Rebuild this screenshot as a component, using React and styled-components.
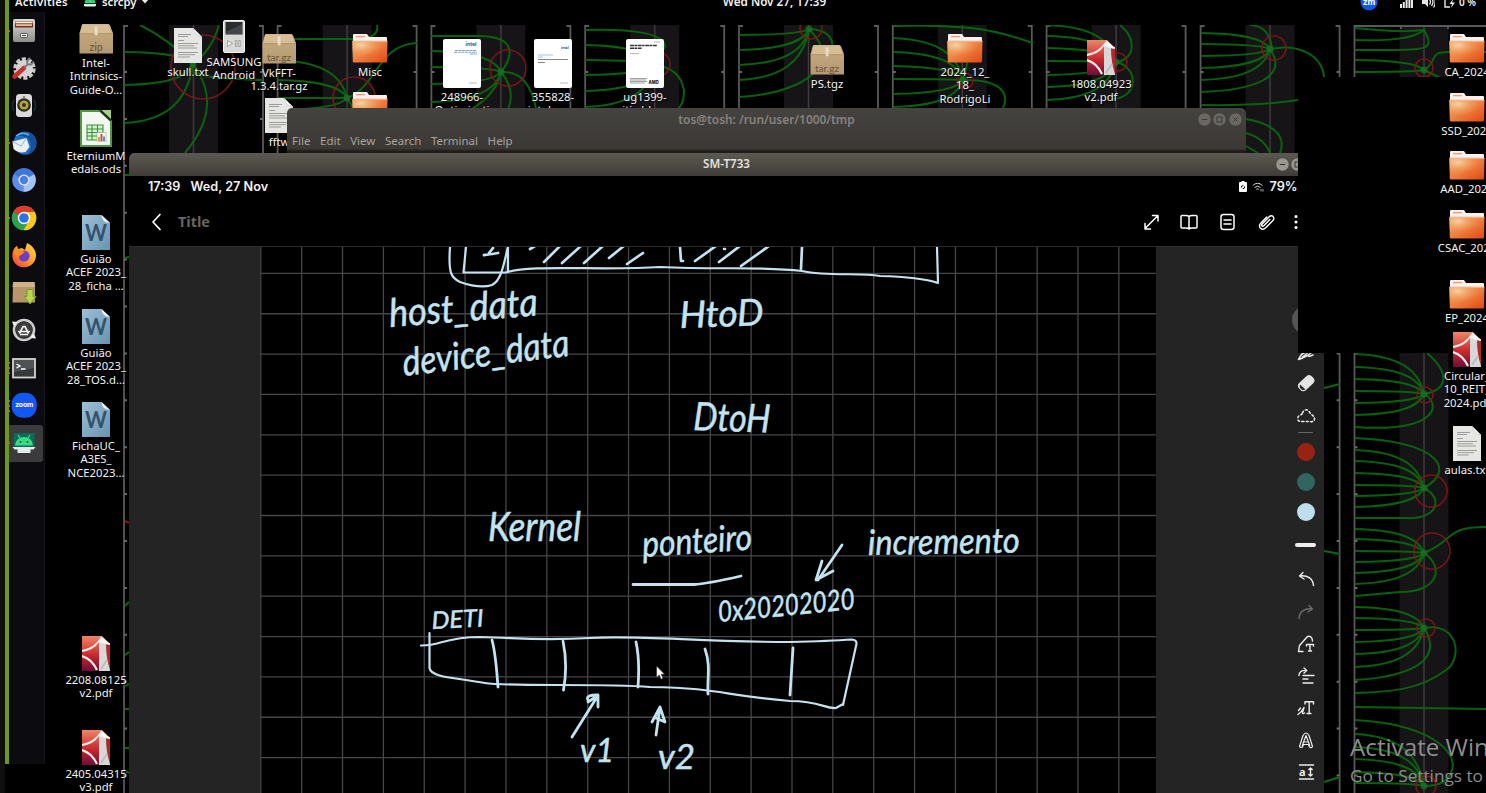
import React from "react";
import styled, { createGlobalStyle } from "styled-components";

const Global = createGlobalStyle`
  * { box-sizing: border-box; }
  html, body { margin: 0; padding: 0; background: #000; overflow: hidden; }
`;

const Desktop = styled.div`
  position: relative;
  width: 1486px;
  height: 793px;
  overflow: hidden;
  background: #000;
  font-family: "Noto Sans", "Open Sans", sans-serif;
  color: #f2f2f2;
`;

const Wallpaper = styled.svg`
  position: absolute;
  left: 0;
  top: 25px;
`;

/* ---------- shell ---------- */

const TopBar = styled.header`
  position: absolute;
  left: 5px;
  right: 0;
  top: -12px;
  height: 27px;
  display: grid;
  grid-template-columns: 1fr auto 1fr;
  align-items: center;
  padding: 0 0 0 10px;
  font: 600 11.3px "Noto Sans", sans-serif;
`;

const BarLeft = styled.div`
  display: flex;
  align-items: center;
  gap: 6px;
  & > span:first-child { margin-right: 10px; letter-spacing: 0.25px; }
`;

const Clock = styled.div`
  padding-left: 48px;
  font-size: 11.7px;
  margin-top: -2px;
`;

const BarRight = styled.div`
  display: flex;
  align-items: center;
  justify-content: flex-end;
  gap: 9px;
  margin-right: -7px;
  font-size: 10px;
  & > svg:first-child { margin-right: 13px; }
`;

const ScreenEdge = styled.div`
  position: absolute;
  left: 0;
  top: 0;
  width: 5px;
  height: 793px;
  background: #0f0f0f;
`;

const Dock = styled.nav`
  position: absolute;
  left: 5px;
  top: 0;
  width: 40px;
  height: 764px;
  padding-top: 12px;
  border-left: 4px solid #6b981d;
`;

const DockList = styled.div`
  height: 752px;
  background: #0c0b0f;
  border-right: 1px solid #17161a;
  display: flex;
  flex-direction: column;
`;

const DockItem = styled.div`
  position: relative;
  height: 37.5px;
  width: 33.5px;
  display: flex;
  align-items: center;
  justify-content: center;
  padding: 0 3px 1px 0;
  border-radius: 0 3px 3px 0;
  background: ${(p) => (p.$active ? "#3b3a3d" : "transparent")};
`;

const RunningDots = styled.i`
  position: absolute;
  left: -1px;
  top: 50%;
  width: 2px;
  height: ${(p) => p.$count * 5 - 3}px;
  transform: translateY(-50%);
  background: repeating-linear-gradient(#a3741a 0 2px, transparent 2px 5px);
`;

const Privacy = styled.div`
  position: absolute;
  left: 1298px;
  top: 77px;
  width: 188px;
  height: 276px;
  background: #000;
`;

const Item = styled.figure`
  position: absolute;
  margin: 0;
  left: ${(p) => p.$x - 50}px;
  top: ${(p) => p.$y}px;
  width: 100px;
  display: flex;
  flex-direction: column;
  align-items: center;
  gap: 2px;
`;

const Caption = styled.figcaption`
  font-size: 11.3px;
  line-height: 13.3px;
  text-align: center;
  white-space: nowrap;
  text-shadow: 1px 1px 1px #000;
  span { display: block; }
`;

const Watermark = styled.div`
  position: absolute;
  left: 1350px;
  top: 731px;
  width: 200px;
  white-space: nowrap;
  font-family: "Open Sans", "Noto Sans", sans-serif;
  color: #8d8d8d;
  font-size: 24.2px;
  line-height: 31px;
`;

const WatermarkNote = styled.div`
  font-size: 17.2px;
  line-height: 27px;
`;

/* ---------- windows ---------- */

const TerminalWindow = styled.section`
  position: absolute;
  left: 287px;
  top: 108px;
  width: 959px;
  height: 45px;
  border-radius: 5px 5px 0 0;
  background: linear-gradient(#454340, #3b3835 90%, #201e1d 96%);
  color: #8a8782;
`;

const TitleBar = styled.div`
  height: ${(p) => p.$h}px;
  display: grid;
  grid-template-columns: 1fr auto 1fr;
  align-items: center;
  font-weight: 600;
  font-size: ${(p) => (p.$focused ? 11.6 : 11.9)}px;
  color: ${(p) => (p.$focused ? "#e3e1dc" : "#86837e")};
  background: ${(p) => (p.$focused ? "linear-gradient(#5c5952, #403d39)" : "transparent")};
  border-radius: 5px 5px 0 0;
  padding-right: ${(p) => p.$pad}px;
  & > span { grid-column: 2; padding-left: ${(p) => p.$pad}px; margin-top: -2px; }
`;

const Buttons = styled.div`
  display: flex;
  justify-content: flex-end;
  gap: 2.7px;
  margin-top: -1px;
`;

const MenuBar = styled.div`
  display: flex;
  align-items: center;
  height: 17px;
  padding-left: 5px;
  gap: 9.6px;
  font-size: 11.5px;
  color: #a7a39c;
`;

const TabletWindow = styled.section`
  position: absolute;
  left: 129px;
  top: 153px;
  width: 1195px;
  height: 640px;
  background: #000;
  overflow: hidden;
  border-radius: 5px 5px 0 0;
  display: flex;
  flex-direction: column;
`;

const StatusBar = styled.div`
  height: 21px;
  display: flex;
  justify-content: space-between;
  align-items: center;
  padding: 0 26.5px 0 19px;
  font: 600 12.7px "Inter", sans-serif;
`;

const StatusGroup = styled.div`
  display: flex;
  align-items: center;
  gap: ${(p) => p.$gap}px;
`;

const NoteHeader = styled.div`
  height: 49px;
  display: flex;
  justify-content: space-between;
  align-items: center;
  padding: 0 25px 0 21px;
`;

const NoteTitle = styled.div`
  display: flex;
  align-items: center;
  gap: 16px;
  font: 700 14.4px "Open Sans", sans-serif;
  color: #6a6664;
`;

const NoteActions = styled.div`
  display: flex;
  align-items: center;
  gap: 20px;
`;

const NoteBody = styled.div`
  flex: 1;
  display: flex;
  background: #242424;
  border-top: 1px solid #2c2c2c;
`;

const Paper = styled.svg`
  margin-left: 131px;
  flex: none;
  background: #000;
`;

const Tools = styled.aside`
  flex: 1;
  display: flex;
  flex-direction: column;
  align-items: center;
  padding: 55px 0 0 131px;
`;

const ToolCell = styled.div`
  height: ${(p) => p.$h}px;
  width: 36px;
  flex: none;
  display: flex;
  align-items: center;
  justify-content: center;
`;

const Swatch = styled.div`
  width: ${(p) => p.$size || 18}px;
  height: ${(p) => p.$size || 18}px;
  border-radius: 50%;
  background: ${(p) => p.$color};
`;

const Rule = styled.div`
  width: ${(p) => p.$w}px;
  height: ${(p) => p.$h}px;
  border-radius: 2px;
  background: ${(p) => p.$color};
`;

/* ---------- wallpaper drawing ---------- */

const FIELDS = [
  { x: 124, n: [193, 64], c: [203, 67, 32], ys: [52, 85, 123], extra: ["M140 25Q170 40 193 64", "M219 25Q212 50 193 64T263 80", "M193 64C212 90 214 118 185 153"] },
  { x: 277, n: [347, 98], c: [354, 98, 21], ys: [60, 80, 98, 110], extra: ["M277 39H350Q380 40 377 25", "M347 98C376 88 378 44 417 43", "M347 98Q362 120 360 150"] },
  { x: 431, n: [501, 72], c: [508, 68, 18], ys: [51, 67, 84, 102], extra: ["M431 36H475C520 35 512 58 501 72Q528 70 536 108", "M501 72Q516 90 508 110", "M501 72Q496 95 470 110"] },
  { x: 585, n: [655, 65], c: [658, 64, 12], ys: [45, 60, 75, 91, 107], extra: ["M585 30Q662 28 665 46L655 65Q680 68 684 90Q684 106 676 110"] },
  { x: 739, n: [809, 29], c: [811, 28, 11], ys: [35, 50, 65, 80], extra: ["M739 97C790 95 850 70 809 29Q836 30 832 52"] },
  { x: 893, n: [963, 80], c: [965, 81, 8], ys: [38, 52, 66, 79, 94, 107], extra: ["M893 26C980 24 1000 32 1033 43", "M963 80C1000 79 1010 93 1003 108", "M963 80Q970 60 966 45"] },
  { x: 1047, n: [1116, 62], c: [1118, 62, 9], ys: [25, 36, 48, 61, 75, 87, 100], extra: ["M1120 25C1138 40 1134 60 1116 62C1138 66 1140 98 1112 99"] },
  { x: 1201, n: [1270, 49], c: [1274, 48, 12], ys: [33, 44, 56, 68, 80], extra: ["M1201 92C1260 90 1288 75 1270 49C1300 43 1322 56 1324 77", "M1201 105Q1260 106 1298 100", "M1246 119C1276 124 1286 138 1280 153", "M1246 133Q1264 138 1270 153M1246 146L1258 153", "M1250 25Q1270 26 1272 49"] },
  { x: 1355, n: [1424, 70], c: [1424, 68, 9], ys: [60, 72], extra: ["M1355 28Q1400 33 1424 30C1436 52 1428 50 1355 50", "M1355 40Q1410 42 1424 30", "M1424 70C1440 60 1426 51 1452 52H1486", "M1424 70L1445 80"] },
  { x: 1355, n: [1424, 394], c: [1425, 395, 8], ys: [354, 367, 379, 391, 403, 415], extra: ["M1427 353C1452 375 1446 390 1424 394C1442 404 1438 433 1355 427"] },
  { x: 1355, n: [1424, 488], c: [1431, 491, 16], ys: [450, 461, 473, 485, 496, 507], extra: ["M1355 438C1440 442 1456 470 1424 488C1444 498 1438 520 1405 518H1355"] },
  { x: 1355, n: [1424, 553], c: [1432, 551, 18], ys: [529, 539, 551, 562, 573, 584], extra: ["M1424 553C1456 540 1444 527 1486 527", "M1424 553C1444 566 1440 592 1400 592L1355 596"] },
  { x: 1355, n: [1424, 628], c: [1426, 628, 9], ys: [607, 618, 630, 642, 654, 667], extra: ["M1355 680C1420 676 1442 656 1424 628C1460 622 1462 660 1446 670C1420 690 1390 692 1355 693"] },
  { x: 1355, n: [1424, 786], c: [1426, 786, 10], ys: [734, 747, 759, 772, 783], extra: ["M1355 707L1486 709", "M1355 720C1430 724 1458 752 1452 770Q1448 786 1424 786"] },
];

function FieldLines() {
  const panels = [124, 277.6, 431.4, 585.2, 739, 892.8, 1046.6, 1200.6, 1354.5];
  const ticks = Array.from({ length: 16 }, (_, i) => 72 + i * 46.9);
  return (
    <Wallpaper width="1486" height="768" viewBox="0 25 1486 768" fill="none">
      {panels.map((x) => (
        <g key={x}>
          <rect x={x + 45} y="25" width="49" height="768" fill="#161417" />
          <path d={`M${x + 69.5} 25V793`} stroke="#3d3b3f" strokeWidth="1.5" />
          <path d={`M${x + 4} 26H${x}V793M${x + 135} 26H${x + 139}V793`} stroke="#59595b" strokeWidth="1.8" />
          {ticks.map((y) => (
            <path key={y} d={`M${x} ${y}h3M${x + 139} ${y}h-3`} stroke="#68686a" strokeWidth="2" />
          ))}
        </g>
      ))}
      <path d="M1354 26H1486M1401 26v3M1448 26v3" stroke="#59595b" strokeWidth="1.8" />
      {FIELDS.map((f, i) => (
        <g key={i}>
          <g stroke="#076b0c" strokeWidth="2" opacity=".92">
            {f.ys.map((y) => (
              <path
                key={y}
                d={`M${f.x} ${y}C${f.x + 40} ${y + (f.n[1] - y) * 0.04} ${f.n[0] - 6} ${f.n[1] + (y - f.n[1]) * 0.68} ${f.n[0]} ${f.n[1]}`}
              />
            ))}
            {f.extra.map((d) => (
              <path key={d} d={d} />
            ))}
          </g>
          <circle cx={f.c[0]} cy={f.c[1]} r={f.c[2]} stroke="#861518" strokeWidth="1.6" opacity=".88" />
          <circle cx={f.n[0]} cy={f.n[1]} r="3.500" fill="#20702a" opacity=".7" />
        </g>
      ))}
      <path
        d="M1324 388l16-4M1324 551l16 3M1324 782l16-5M125 175h4M125 258l4-1M125 606l4-4M125 655l4-3M125 686l4-2M125 709h4M125 748h4M125 771l4 2"
        stroke="#076b0c"
        strokeWidth="2"
      />
      <path d="M125 521l4 2" stroke="#861518" strokeWidth="2" />
    </Wallpaper>
  );
}

/* ---------- file icons ---------- */

const Gradients = () => (
  <svg width="0" height="0" style={{ display: "block" }}>
    <defs>
      <linearGradient id="folder" x1="0" y1="0" x2="1" y2="1">
        <stop offset="0" stopColor="#f3a765" />
        <stop offset=".45" stopColor="#ee8444" />
        <stop offset="1" stopColor="#e4460f" />
      </linearGradient>
      <radialGradient id="glow" cx=".25" cy=".2" r=".6">
        <stop offset="0" stopColor="#f9dcae" stopOpacity=".85" />
        <stop offset="1" stopColor="#f0a060" stopOpacity="0" />
      </radialGradient>
      <linearGradient id="box" x1="0" y1="0" x2="0" y2="1">
        <stop offset="0" stopColor="#c9ac82" />
        <stop offset="1" stopColor="#b39a71" />
      </linearGradient>
      <linearGradient id="word" x1="0" y1="0" x2="1" y2="1">
        <stop offset="0" stopColor="#9cc0d6" />
        <stop offset="1" stopColor="#6894b0" />
      </linearGradient>
      <linearGradient id="pdf" x1="0" y1="0" x2="0" y2="1">
        <stop offset="0" stopColor="#f08468" />
        <stop offset=".55" stopColor="#c8282c" />
        <stop offset="1" stopColor="#6d0d3a" />
      </linearGradient>
      <linearGradient id="metal" x1="0" y1="0" x2="0" y2="1">
        <stop offset="0" stopColor="#dcdcda" />
        <stop offset="1" stopColor="#8d8d8b" />
      </linearGradient>
      <linearGradient id="fire" x1="1" y1="0" x2="0" y2="1">
        <stop offset="0" stopColor="#ffe04a" />
        <stop offset=".5" stopColor="#ff9a26" />
        <stop offset="1" stopColor="#f0314e" />
      </linearGradient>
    </defs>
  </svg>
);

const FolderArt = () => (
  <svg width="36" height="29" viewBox="0 0 36 29">
    <path d="M1 1q0-1 1-1h13l2 3h17q1 0 1 1v6H1z" fill="#f6f0ee" />
    <path d="M4 2.6h9" stroke="#ee9c77" strokeWidth="1.4" />
    <path d="M0.3 7.2h35.2L35 27.5q0 1-1 1H1.8q-1 0-1-1z" fill="url(#folder)" />
    <path d="M0.3 7.2h35.2L35 18Q14 18 .8 27z" fill="url(#glow)" />
    <path d="M.3 7.2h35.2" stroke="#f6b08b" />
  </svg>
);

const BoxArt = ({ label }) => (
  <svg width="34" height="30" viewBox="0 0 34 30">
    <path d="M4 0h25q2 0 3 4l2 5v20.5H.5V9L2 4q.6-4 2-4z" fill="url(#box)" />
    <path d="M3.6.6h26l3.2 9H1.2z" fill="#d6bd96" />
    <path d="M.5 9.7h33" stroke="#a88d62" strokeWidth=".8" />
    <path d="M15.6 2.5h3v8l-1.5 1.3-1.5-1.3z" fill="#eadcc3" />
    <text x="17" y="26.500" textAnchor="middle" fontFamily="Lato, sans-serif" fontWeight="500" fontSize={label === "zip" ? 10.5 : 10} fill="#6d583a">
      {label}
    </text>
  </svg>
);

const TextArt = () => (
  <svg width="28" height="35" viewBox="0 0 28 35">
    <path d="M0 0h19l9 9v26H0z" fill="#e6e6e4" />
    <path d="M19 0q1 7 9 9z" fill="#fff" stroke="#b5b5b3" strokeWidth=".6" />
    <path d="M4 6.500h13M4 8.500h10M4 12.500h6M4 15.500h20M4 17.800h16M4 20h19M4 24.500h20M4 26.700h17M4 29h12" stroke="#94948f" strokeWidth=".9" />
  </svg>
);

const WordArt = () => (
  <svg width="28" height="35" viewBox="0 0 28 35">
    <path d="M0 0h19.500L28 8v27H0z" fill="url(#word)" />
    <path d="M19.500 0q0 7 8.500 8z" fill="#f0f4f7" />
    <text x="14" y="26" textAnchor="middle" fontFamily="Lato, sans-serif" fontWeight="700" fontSize="22" fill="#36516b" textLength="22" lengthAdjust="spacingAndGlyphs">
      W
    </text>
  </svg>
);

const PdfArt = () => (
  <svg width="28" height="35" viewBox="0 0 28 35">
    <path d="M0 0h20l8 8v27H0z" fill="url(#pdf)" />
    <path d="M17 5l11 2v28H17z" fill="#d9d8d8" />
    <path d="M24 8q0 14 4 26V9z" fill="#b8262b" />
    <path d="M0 14Q12 12 19 1l9 8Q22 8 17 6 12 14 0 16z" fill="#f3efee" />
    <path d="M0 20Q10 23 15 34" stroke="#f3efee" strokeWidth="2.2" fill="none" />
    <path d="M19 33q4-6 6-9" stroke="#bdbdbd" strokeWidth="2" fill="none" />
    <path d="M19 0l9 8-6-1z" fill="#fff" />
  </svg>
);

const SheetArt = () => (
  <svg width="32" height="37" viewBox="0 0 32 37">
    <path d="M1 1h19l11 10v25H1z" fill="#f4f6f1" stroke="#4c9a3c" strokeWidth="2" />
    <path d="M20 0h11v10z" fill="#a7cd86" />
    <path d="M20 0l11 10.500" stroke="#152a10" strokeWidth="2" />
    <path d="M7 15h16v15H7z" fill="#d9efcf" />
    <path d="M7 15h16v15H7zM7 19h16M7 22.500h16M7 26h16M12 15v15M17.500 15v15" stroke="#2f9a33" strokeWidth="1.1" fill="none" />
    <rect x="17" y="22.500" width="9" height="9" fill="#fbfbfb" stroke="#999" strokeWidth=".5" />
    <path d="M18 27h2v4h-2z" fill="#d9a030" />
    <path d="M20.500 24h2v7h-2z" fill="#c9522c" />
    <path d="M23 26.500h2V31h-2z" fill="#5b8ecb" />
  </svg>
);

const PlayerArt = () => (
  <svg width="22" height="33" viewBox="0 0 22 33">
    <rect x=".5" y=".5" width="21" height="32" rx="1.500" fill="#d9d9d7" stroke="#f4f4f4" />
    <rect x="2.500" y="2" width="17" height="12.500" fill="#2b2c2e" />
    <path d="M3 12L19 4v10H3z" fill="#444649" />
    <path d="M4.500 20.500l5 3-5 3zM12.500 20.500h1.500v6h-1.500zM15.800 20.500h1.500v6h-1.500z" fill="#f4f4f4" stroke="#888" strokeWidth=".7" />
  </svg>
);

const PageArt = ({ variant }) => (
  <svg width="38" height="49" viewBox="0 0 38 49">
    <rect width="38" height="49" rx="2" fill="#fff" />
    {variant === "amd" ? (
      <g>
        <path d="M4 6.500h27M4 9.300h12" stroke="#333" strokeWidth="1.500" strokeDasharray="4 .5 2.500 .6" />
        <path d="M4 14.500h9M28 3h6" stroke="#999" strokeWidth=".7" />
        <path d="M4 39.500h17M4 41h16M4 42.500h17M4 44h15" stroke="#888" strokeWidth=".8" />
        <text x="22.500" y="44.500" fontSize="4.200" fontWeight="800" fill="#111" fontFamily="Inter">AMD</text>
      </g>
    ) : (
      <g>
        <text x={variant === "big" ? 22.5 : 27} y={variant === "big" ? 6.5 : 9.5} fontSize={variant === "big" ? 5.2 : 3.6} fontWeight="700" fill="#1d63a5" fontFamily="Inter">
          intel
        </text>
        {variant === "big" ? (
          <path d="M12 11.500h22M11 13.300h23M27 15h7" stroke="#7aa4cb" strokeWidth="1.100" strokeDasharray="3 .6" />
        ) : (
          <path d="M4 16h15M4 18h5" stroke="#8ab" strokeWidth=".7" />
        )}
        {variant !== "big" && <path d="M4 20.500h30M4 23.500h7" stroke="#555" strokeWidth=".7" />}
        <path d="M26 44h8" stroke="#aaa" strokeWidth=".8" />
      </g>
    )}
  </svg>
);

const ART = {
  folder: <FolderArt />,
  zip: <BoxArt label="zip" />,
  tar: <BoxArt label="tar.gz" />,
  txt: <TextArt />,
  word: <WordArt />,
  pdf: <PdfArt />,
  ods: <SheetArt />,
  player: <PlayerArt />,
  intel: <PageArt variant="big" />,
  intel2: <PageArt variant="small" />,
  amd: <PageArt variant="amd" />,
};

const FILES = [
  [96, 24, "zip", ["Intel-", "Intrinsics-", "Guide-O…"]],
  [96, 110, "ods", ["EterniumM", "edals.ods"]],
  [96, 215, "word", ["Guião", "ACEF 2023_", "28_ficha …"]],
  [96, 309, "word", ["Guião", "ACEF 2023_", "28_TOS.d…"]],
  [96, 402, "word", ["FichaUC_", "A3ES_", "NCE2023…"]],
  [96, 636, "pdf", ["2208.08125", "v2.pdf"]],
  [96, 730, "pdf", ["2405.04315", "v3.pdf"]],
  [188, 28, "txt", ["skull.txt"]],
  [234, 20, "player", ["SAMSUNG", "Android"]],
  [279, 34, "tar", ["VkFFT-", "1.3.4.tar.gz"]],
  [279, 98, "txt", ["fftw"]],
  [370, 34, "folder", ["Misc"]],
  [370, 92, "folder", []],
  [462, 39, "intel", ["248966-", "Optimizati"]],
  [553, 39, "intel2", ["355828-", "intel-soxy"]],
  [645, 39, "amd", ["ug1399-", "vitis-hls-en"]],
  [827, 45, "tar", ["PS.tgz"]],
  [965, 34, "folder", ["2024_12_", "18_", "RodrigoLi"]],
  [1101, 40, "pdf", ["1808.04923", "v2.pdf"]],
];

const COURSE_FILES = [
  [1467, 34, "folder", ["CA_2024"]],
  [1467, 93, "folder", ["SSD_2024"]],
  [1467, 151, "folder", ["AAD_2024"]],
  [1467, 210, "folder", ["CSAC_2024"]],
  [1467, 280, "folder", ["EP_2024"]],
  [1467, 332, "pdf", ["Circular_", "10_REIT_", "2024.pdf"]],
  [1467, 426, "txt", ["aulas.txt"]],
];

const FileItems = ({ files }) =>
  files.map(([x, y, kind, lines]) => (
    <Item key={`${x}-${y}`} $x={x} $y={y}>
      {ART[kind]}
      <Caption>
        {lines.map((l) => (
          <span key={l}>{l}</span>
        ))}
      </Caption>
    </Item>
  ));

/* ---------- dock icons ---------- */

const DockSvg = ({ children }) => (
  <svg width="26" height="26" viewBox="0 0 26 26" fill="none">
    {children}
  </svg>
);

const Droid = () => (
  <g>
    <path d="M4 14a9 8.500 0 0 1 18 0z" fill="#3ddc84" />
    <path d="M7 3.500l2.500 4M19 3.500l-2.500 4" stroke="#3ddc84" strokeWidth="1.300" />
    <circle cx="9.500" cy="10.500" r="1" fill="#0b5b45" />
    <circle cx="16.500" cy="10.500" r="1" fill="#0b5b45" />
  </g>
);

const DOCK = [
  {
    id: "files", running: 1, art: (
      <>
        <rect x="2" y="2" width="22" height="23" rx="2" fill="url(#metal)" />
        <path d="M4 4.500h18v6H4z" fill="#6b3020" />
        <path d="M4.500 5.500h17M5 8h16" stroke="#fff1df" strokeWidth="1.400" />
        <path d="M4.500 6.800h17" stroke="#e2571d" strokeWidth="1" />
        <rect x="9.500" y="16.500" width="7" height="4" rx="1" fill="#eee" stroke="#555" />
        <path d="M11 18.500h4" stroke="#444" />
      </>
    ),
  },
  {
    id: "settings", art: (
      <>
        <circle cx="13.500" cy="13.500" r="9.200" stroke="#c9c9c7" strokeWidth="4" strokeDasharray="4 1.780" />
        <circle cx="13.500" cy="13.500" r="8.500" fill="#d3d3d1" />
        <path d="M3.500 21.500L13 13" stroke="#cf2f2c" strokeWidth="4.500" strokeLinecap="round" />
        <path d="M13 13l3.500-3.500-.5-3.500 3-3M16.500 9.500l3.500 0 3-3" stroke="#77797a" strokeWidth="1.800" />
      </>
    ),
  },
  {
    id: "rhythmbox", art: (
      <>
        <path d="M3 8q-3 5 0 11M23 8q3 5 0 11" stroke="#1f2c3f" strokeWidth="1.500" />
        <rect x="5" y="2" width="16" height="23" rx="3.500" fill="#dadad8" />
        <circle cx="13" cy="13" r="6.800" fill="#2a2a24" />
        <circle cx="13" cy="13" r="4.600" fill="#b9a53c" />
        <circle cx="13" cy="13" r="2" fill="#35331f" />
        <circle cx="13" cy="5" r="1.100" fill="#777" />
      </>
    ),
  },
  {
    id: "thunderbird", running: 1, art: (
      <>
        <circle cx="14" cy="13" r="11.500" fill="#1f6fc4" />
        <path d="M4 7q8-8 17-3 5 5 4 11-2 8-9 10 6-7 3-14Q12 3 4 7z" fill="#174f9c" />
        <path d="M1.500 11.500l14-3.500 3 9-4 5q-7 1.500-12-3z" fill="#edf0f3" />
        <path d="M1.500 11.500l8.500 4.500 5.500-8" stroke="#9db0c4" />
        <path d="M5 6q6-5 13-1" stroke="#5cb4ee" strokeWidth="1.500" />
      </>
    ),
  },
  {
    id: "chromium", art: (
      <>
        <circle cx="13" cy="13" r="11.800" fill="#5b8def" />
        <path d="M13 13L2.800 7A11.800 11.800 0 0 1 23.200 7.200z" fill="#3f74d8" />
        <path d="M13 13l10.200-5.800A11.800 11.800 0 0 1 12.500 24.800z" fill="#a5c2f7" />
        <circle cx="13" cy="13" r="5.600" fill="#dfe9fb" />
        <circle cx="13" cy="13" r="4.200" fill="#4a7fe0" />
      </>
    ),
  },
  {
    id: "chrome", running: 1, art: (
      <>
        <circle cx="13" cy="13" r="12.300" fill="#2fa04f" />
        <path d="M13 13L2.300 6.900A12.300 12.300 0 0 1 23.700 7z" fill="#dd3b2e" />
        <path d="M13 7h10.700A12.300 12.300 0 0 1 12.500 25.300L18.500 15z" fill="#fbc819" />
        <circle cx="13" cy="13" r="6.200" fill="#fff" />
        <circle cx="13" cy="13" r="4.800" fill="#2a72e8" />
      </>
    ),
  },
  {
    id: "firefox", art: (
      <>
        <path d="M13 25.300C5 25 1 19 1.300 12.500 1.700 8 4 5 6 3.800L7 7l4-1 3 2 2-7c5 2 9 7 9 12.500C25 20 20 25.300 13 25.300z" fill="url(#fire)" />
        <circle cx="13" cy="14" r="5.600" fill="#6d3fc9" />
        <path d="M3 9q4-2 8 0l3 1-4 3q-3 1-2 4-4-2-5-8z" fill="#ff8a1f" />
      </>
    ),
  },
  {
    id: "installer", art: (
      <>
        <path d="M2 3q0-1 1-1h20q1 0 1 1v19.500H1.500z" fill="#b8966b" />
        <path d="M2 3q0-1 1-1h20l1 5H1.500z" fill="#d0b288" />
        <path d="M16 9.500h6v7h3l-6 7.500-6-7.500h3z" fill="#b4d84b" stroke="#7a9a28" />
      </>
    ),
  },
  {
    id: "updater", art: (
      <>
        <circle cx="13" cy="13" r="10" stroke="#cfcfcd" strokeWidth="2.600" />
        <circle cx="13" cy="13" r="8.400" fill="#3e3e3e" />
        <path d="M8.500 16.500L12 9.500h2l3.500 7M7 14.500h12M9 17.500h8" stroke="#f2f2f2" strokeWidth="1.700" />
        <path d="M1 4.500L7 5l-4 4.500zM25 21.500L19 21l4-4.500z" fill="#eee" />
      </>
    ),
  },
  {
    id: "terminal", running: 3, art: (
      <>
        <rect x="2" y="4" width="22" height="18.500" fill="#36383a" stroke="#d4d4d2" strokeWidth="1.800" />
        <path d="M3 5h20v8L3 17z" fill="#505254" />
        <path d="M5.500 9l3.500 2-3.500 2M10 14h4.500" stroke="#fff" strokeWidth="1.300" />
      </>
    ),
  },
  {
    id: "zoom", running: 3, art: (
      <>
        <rect x=".7" y=".7" width="25" height="25" rx="11" fill="#1258f0" />
        <text x="13.200" y="15" textAnchor="middle" fontFamily="Inter" fontWeight="700" fontSize="6.800" fill="#fff" textLength="18">
          zoom
        </text>
      </>
    ),
  },
  {
    id: "scrcpy", running: 1, active: true, art: (
      <>
        <rect x="2.500" y="3" width="21" height="16" fill="#0c6b58" />
        <g transform="translate(0 1.500)">
          <Droid />
        </g>
        <path d="M1.500 17h23l-2 2.500h-3V23h-13v-3.500h-3z" fill="#e6ebea" />
      </>
    ),
  },
];

/* ---------- window controls ---------- */

const WinButton = ({ kind, focused }) => (
  <svg width="13" height="13" viewBox="0 0 13 13" fill="none" stroke={focused ? "#33312e" : "#3b3936"}>
    <circle cx="6.500" cy="6.500" r="6.200" fill={focused ? "#9a978f" : "#6b6863"} stroke="none" />
    {kind === "min" && <path d="M3.700 6.500h5.600" />}
    {kind === "max" && <rect x="4" y="4" width="5" height="5" />}
    {kind === "close" && <path d="M4.500 4.500l4 4M8.500 4.500l-4 4" />}
  </svg>
);

/* ---------- tablet tools ---------- */

const Glyph = ({ w = 20, h = 20, color = "#ececec", children, sw = 1.4 }) => (
  <svg width={w} height={h} viewBox={`0 0 ${w} ${h}`} fill="none" stroke={color} strokeWidth={sw} strokeLinecap="round" strokeLinejoin="round">
    {children}
  </svg>
);

const TOOL_ITEMS = [
  [35, <Swatch key="s" $size={28} $color="#555" />],
  [30, (
    <Glyph key="m" h={30} sw={1.5}>
      <path d="M2.500 22.500l3-5 7-4.500 4 1.500-4 3.500-7 3.500zM6.500 20l5-4M13 19.500l4-1.500" />
    </Glyph>
  )],
  [32, (
    <Glyph key="e">
      <rect x="1.300" y="5.300" width="17.600" height="9.800" rx="4" transform="rotate(-43 10 10)" fill="#e4e4e4" stroke="none" />
      <path d="M4.200 11l5.600 5.300-1.600 1.200q-1.800.5-3.400-.9t-1.700-3.300z" fill="#2b2b2b" stroke="#e4e4e4" strokeWidth="1" />
    </Glyph>
  )],
  [32, <Glyph key="l" sw={1.5}><path d="M6.500 8a3.700 3.700 0 0 1 7.200-.5c2 3 5 3.500 4.800 6.500-.3 3-3 3-5 2.500H6.500C3.500 17 1.500 15.500 1.700 13c.3-3 4-2.500 4.800-5z" strokeDasharray="2 2.300" /></Glyph>],
  [3, <Rule key="r" $w={15} $h={1} $color="#666" />],
  [3, null],
  [30, <Swatch key="a" $color="#992313" />],
  [30, <Swatch key="b" $color="#30665f" />],
  [30, <Swatch key="c" $color="#bfdeed" />],
  [36, <Rule key="w" $w={21} $h={3.5} $color="#eee" />],
  [32, <Glyph key="u"><path d="M7 3.500L3.500 7 8 10M4 6.800C12 6 17 10 17.500 16.500" /></Glyph>],
  [33, <Glyph key="d" color="#6c6c6c"><path d="M13 3.500L16.500 7 12 10M16 6.800C8 6 3.500 10 3 16.500" /></Glyph>],
  [32, <Glyph key="p"><path d="M2.500 17.500l1-6L11 3q1.500-1.500 3.500-.3T16.500 7M2.500 17.500H7M10.500 12v-1.500h7V12M14 10.500V17M12.500 17h3" /></Glyph>],
  [32, <Glyph key="i"><path d="M3 9.500C3 5.500 6 4 10.500 4.500M8 2l2.700 2.500L8 7M7 9.500h11M7 13h5M7 17h10" /></Glyph>],
  [32, (
    <Glyph key="t">
      <path d="M2 16.500q4-3 6-7l-1.500 5q0 2 2 .5M9 6V3.700h8.500V6M13.200 3.700V15.500M11 15.500h4" />
      <path d="M2.500 12.500l2-2.500" />
    </Glyph>
  )],
  [32, (
    <Glyph key="o" sw={1.2}>
      <path d="M3.500 16.500L7 5.500q3-5 6 0l3.500 11q-1 2-3 .5l-1-2.500h-5l-1 2.500q-2 1-3-.5z" />
      <path d="M6.300 15.500L10 5.500l3.700 10M7.700 12h4.600" />
    </Glyph>
  )],
  [32, (
    <Glyph key="z">
      <path d="M3.500 3h14M3.500 17h14M14.500 6v8M12.800 7.500L14.500 6l1.700 1.500M12.800 12.500l1.700 1.500 1.700-1.500" />
      <text x="3" y="13.500" fontFamily="Noto Sans" fontWeight="700" fontSize="11" fill="#ececec" stroke="none">a</text>
    </Glyph>
  )],
];

/* words on the page: text, x, baseline, width, size, rotation */
const NOTES = [
  ["host_data", 390, 327, 149, 39, -4.5],
  ["device_data", 404, 376, 168, 38, -7],
  ["HtoD", 680, 328, 84, 37, -2],
  ["DtoH", 693, 430, 77, 39, 2],
  ["Kernel", 488, 541, 93, 40, 0],
  ["ponteiro", 643, 557, 110, 36, -4],
  ["incremento", 868, 555, 152, 35, -1],
  ["0x20202020", 719, 622, 137, 29, -5.5],
  ["DETI", 432, 629, 52, 24, -3],
  ["v1", 580, 762, 34, 33, 0],
  ["v2", 658, 769, 37, 34, 0],
];

const Hand = styled.text`
  font-family: "Lato", sans-serif;
  font-style: italic;
  font-weight: 400;
  font-size: ${(p) => p.$size}px;
  fill: #c3e3f1;
  stroke: #c3e3f1;
  stroke-width: 0.5px;
  stroke-linejoin: round;
`;

function NotePage() {
  const cols = Array.from({ length: 22 }, (_, i) => 260.8 + i * 40.86);
  const rows = Array.from({ length: 13 }, (_, i) => 273.4 + i * 40.35);
  return (
    <Paper width="896" height="546" viewBox="260 247 896 546" fill="none">
      <g stroke="#464648" strokeWidth="1.300">
        {cols.map((x) => <path key={x} d={`M${x} 247V793`} />)}
        {rows.map((y) => <path key={y} d={`M260 ${y}H1156`} />)}
      </g>
      <g stroke="#c3e3f1" strokeWidth="2.200" strokeLinecap="round" strokeLinejoin="round">
        <path d="M450 247C448 275 452 278 460 282Q480 289 492 285C502 280 504 262 508 247V272" />
        <path d="M466 247L463.500 272.500H506C530 264 600 271 660 267C720 270 760 266 802 271C830 277 860 272 880 276Q920 277 938 283L937 247" />
        <path d="M484 255q9-1 14-2M489 253l4-5" strokeWidth="2.800" />
        <path d="M530 249l5-3M544 262l16-16M562 263l20-18M584 263l20-18M609 258l16-13M627 264l16-11M680 247l1 14h2M695 261l21-15M719 262l21-16M741 266l28-20M724 249l1 0M802 247l-1 22" strokeWidth="2.700" />
        <path d="M633 584.500H694Q706 584 741 576" strokeWidth="2.800" />
        <path d="M842 545l-24 35M822 561l-6 19 17-9" strokeWidth="2.800" />
        <path d="M421 645.500C440 646 445 637 480 637C520 638 540 641 590 638C640 635 700 642 790 642Q830 641 852 639.500Q858 640 856 646L843 705" />
        <path d="M429.500 633V668C431 677 450 677 485 683C510 687 600 683 650 687C720 688 720 695 790 701C820 701 825 709 836 708L843 704" />
        <path d="M492 640C496 655 497 675 498 687M563 641Q568 665 563.500 690M636 642Q640 660 638 687M705 649C711 665 707 680 708 694M793 648L790 695" strokeWidth="2.800" />
        <path d="M572 737L597 697M588 700Q585 695 598 695V707M588 702l6-4" strokeWidth="2.800" />
        <path d="M656 735L660 707M652 722L660 707L665 722L656 718" strokeWidth="2.800" />
      </g>
      {NOTES.map(([t, x, y, w, s, r]) => (
        <Hand key={t} x={x} y={y} $size={s} textLength={w} lengthAdjust="spacingAndGlyphs" transform={`rotate(${r} ${x} ${y})`}>
          {t}
        </Hand>
      ))}
      <path d="M656.500 666v11.500l2.700-2.400 1.900 4.200 2-1-1.900-4h3.500z" fill="#fff" stroke="#222" strokeWidth=".6" />
    </Paper>
  );
}

const MoreDots = styled.svg`
  margin-left: -3px;
`;

const Caret = styled.svg`
  margin-left: -2px;
`;

export default function App() {
  return (
    <Desktop>
      <Global />
      <Gradients />
      <FieldLines />
      <FileItems files={FILES} />

      <TerminalWindow>
        <TitleBar $h={24} $pad={4}>
          <span>tos@tosh: /run/user/1000/tmp</span>
          <Buttons>
            <WinButton kind="min" />
            <WinButton kind="max" />
            <WinButton kind="close" />
          </Buttons>
        </TitleBar>
        <MenuBar>
          {["File", "Edit", "View", "Search", "Terminal", "Help"].map((m) => (
            <span key={m}>{m}</span>
          ))}
        </MenuBar>
      </TerminalWindow>

      <TabletWindow>
        <TitleBar $h={23} $pad={4} $focused>
          <span>SM-T733</span>
          <Buttons>
            <WinButton kind="min" focused />
            <WinButton kind="max" focused />
            <WinButton kind="close" focused />
          </Buttons>
        </TitleBar>
        <StatusBar>
          <StatusGroup $gap={10}>
            <span>17:39</span>
            <span>Wed, 27 Nov</span>
          </StatusGroup>
          <StatusGroup $gap={5}>
            <svg width="8" height="11" viewBox="0 0 8 11">
              <path d="M2.500 0h3v1H7q1 0 1 1v8q0 1-1 1H1q-1 0-1-1V2q0-1 1-1h1.500z" fill="#fff" />
              <path d="M2.300 6.500q0-2 2-2M5.700 5.500q0 2.300-2 2.300" stroke="#000" fill="none" />
            </svg>
            <svg width="12" height="10" viewBox="0 0 12 10" fill="none" stroke="#d6d6d6">
              <path d="M.8 3.500Q5.500-1 10.500 3.500M2.500 5.500q3-2.700 6 0M4.300 7.300q1.300-1 2.500 0" />
              <path d="M9 7v2.500M11 9.500V7" strokeWidth=".8" />
            </svg>
            <span>79%</span>
          </StatusGroup>
        </StatusBar>
        <NoteHeader>
          <NoteTitle>
            <Glyph w={12} h={18} color="#fff" sw={1.7}><path d="M10 1.500L3 9l7 7.500" /></Glyph>
            <span>Title</span>
          </NoteTitle>
          <NoteActions>
            <Glyph w={18} color="#fff" sw={1.5}><path d="M3 16.500L15.500 4M10.500 3.500H16V9M3 11.500v5.500h5.500" /></Glyph>
            <Glyph w={18} color="#fff" sw={1.5}><path d="M9 4.500Q8 3.500 6 3.500H2q-1 0-1 1V15q0 1 1 1h4q2 0 3 1 1-1 3-1h4q1 0 1-1V4.500q0-1-1-1h-4q-2 0-3 1zM9 4.500V17" /></Glyph>
            <Glyph w={19} color="#fff" sw={1.5}><rect x="3" y="2.500" width="13" height="15" rx="2.500" /><path d="M6 8h7M6 12h7" /></Glyph>
            <Glyph w={19} color="#fff" sw={1.4}><path d="M12.800 7.500l-6 6.200q-1 1-1.800.2t.2-1.900l7-7.200q2-1.900 3.900-.2 1.700 1.900-.2 4L8.700 15.800q-2.800 2.600-5.200.4-2.200-2.400.4-5.200l5.800-6" /></Glyph>
            <MoreDots width="6" height="18" viewBox="0 0 6 18" fill="#fff">
              <circle cx="3" cy="3.500" r="1.500" />
              <circle cx="3" cy="9" r="1.500" />
              <circle cx="3" cy="14.500" r="1.500" />
            </MoreDots>
          </NoteActions>
        </NoteHeader>
        <NoteBody>
          <NotePage />
          <Tools>
            {TOOL_ITEMS.map(([h, art], i) => (
              <ToolCell key={i} $h={h}>{art}</ToolCell>
            ))}
          </Tools>
        </NoteBody>
      </TabletWindow>

      <Privacy />
      <FileItems files={COURSE_FILES} />

      <TopBar>
        <BarLeft>
          <span>Activities</span>
          <svg width="12" height="14" viewBox="3 2 20 20"><Droid /><path d="M1.500 15.500h23l-3 4h-17z" fill="#e6ebea" /></svg>
          <span>scrcpy</span>
          <Caret width="8" height="5" viewBox="0 0 8 5"><path d="M0 0h8L4 4.500z" fill="#eee" /></Caret>
        </BarLeft>
        <Clock>Wed Nov 27, 17:39</Clock>
        <BarRight>
          <svg width="18" height="18" viewBox="0 0 18 18">
            <circle cx="9" cy="9" r="8.500" fill="#1258e8" />
            <text x="9" y="11.500" textAnchor="middle" fontFamily="Inter" fontWeight="700" fontSize="8.500" fill="#fff">zm</text>
          </svg>
          <svg width="13" height="12" viewBox="0 0 13 12" fill="#e8e8e8">
            <path d="M0 8h2v4H0zM2.800 6h2v6h-2zM5.600 4h2v8h-2zM8.400 2h2v10h-2zM11 0h2v12h-2z" />
          </svg>
          <svg width="13" height="12" viewBox="0 0 13 12" fill="none" stroke="#e8e8e8" strokeWidth="1.300">
            <path d="M0 4h3l3-3v10L3 8H0z" fill="#e8e8e8" stroke="none" /><path d="M7.500 3.500q2 2.500 0 5M9.500 2q3 4 0 8M11.500 .5q3.500 5.500 0 11" />
          </svg>
          <StatusGroup $gap={4}>
            <svg width="11" height="13" viewBox="0 0 11 13" fill="none" stroke="#e8e8e8" strokeWidth="1.400">
              <path d="M6 12H1V2h7v3" /><path d="M9 4L5.500 9H8l-1 4 4-5.500H8.300z" fill="#e8e8e8" stroke="none" />
            </svg>
            <span>0 %</span>
          </StatusGroup>
          <svg width="8" height="5" viewBox="0 0 8 5"><path d="M0 0h8L4 4.500z" fill="#eee" /></svg>
        </BarRight>
      </TopBar>

      <ScreenEdge />
      <Dock>
        <DockList>
          {DOCK.map((d) => (
            <DockItem key={d.id} $active={d.active}>
              {d.running && <RunningDots $count={d.running} />}
              <DockSvg>{d.art}</DockSvg>
            </DockItem>
          ))}
        </DockList>
      </Dock>

      <Watermark>
        Activate Windows
        <WatermarkNote>Go to Settings to activate Windows.</WatermarkNote>
      </Watermark>
    </Desktop>
  );
}
